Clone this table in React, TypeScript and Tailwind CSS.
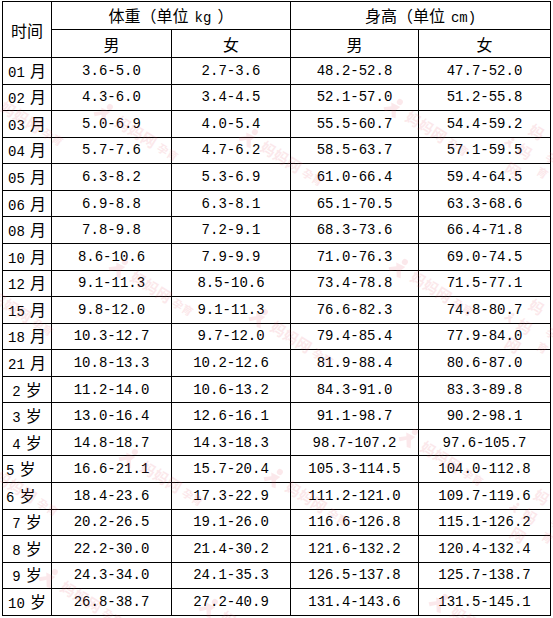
import React from "react";

const rows: [string, string, string, string, string, string, boolean?][] = [
  ["01", "月", "3.6-5.0", "2.7-3.6", "48.2-52.8", "47.7-52.0"],
  ["02", "月", "4.3-6.0", "3.4-4.5", "52.1-57.0", "51.2-55.8"],
  ["03", "月", "5.0-6.9", "4.0-5.4", "55.5-60.7", "54.4-59.2"],
  ["04", "月", "5.7-7.6", "4.7-6.2", "58.5-63.7", "57.1-59.5"],
  ["05", "月", "6.3-8.2", "5.3-6.9", "61.0-66.4", "59.4-64.5"],
  ["06", "月", "6.9-8.8", "6.3-8.1", "65.1-70.5", "63.3-68.6"],
  ["08", "月", "7.8-9.8", "7.2-9.1", "68.3-73.6", "66.4-71.8"],
  ["10", "月", "8.6-10.6", "7.9-9.9", "71.0-76.3", "69.0-74.5"],
  ["12", "月", "9.1-11.3", "8.5-10.6", "73.4-78.8", "71.5-77.1"],
  ["15", "月", "9.8-12.0", "9.1-11.3", "76.6-82.3", "74.8-80.7"],
  ["18", "月", "10.3-12.7", "9.7-12.0", "79.4-85.4", "77.9-84.0"],
  ["21", "月", "10.8-13.3", "10.2-12.6", "81.9-88.4", "80.6-87.0"],
  ["2", "岁", "11.2-14.0", "10.6-13.2", "84.3-91.0", "83.3-89.8"],
  ["3", "岁", "13.0-16.4", "12.6-16.1", "91.1-98.7", "90.2-98.1"],
  ["4", "岁", "14.8-18.7", "14.3-18.3", "98.7-107.2", "97.6-105.7"],
  ["5", "岁", "16.6-21.1", "15.7-20.4", "105.3-114.5", "104.0-112.8", true],
  ["6", "岁", "18.4-23.6", "17.3-22.9", "111.2-121.0", "109.7-119.6", true],
  ["7", "岁", "20.2-26.5", "19.1-26.0", "116.6-126.8", "115.1-126.2"],
  ["8", "岁", "22.2-30.0", "21.4-30.2", "121.6-132.2", "120.4-132.4"],
  ["9", "岁", "24.3-34.0", "24.1-35.3", "126.5-137.8", "125.7-138.7"],
  ["10", "岁", "26.8-38.7", "27.2-40.9", "131.4-143.6", "131.5-145.1"],
];

// faint pink stamps scattered over the table
const marks = [
  [-20, 80], [95, 95], [240, 120], [385, 90], [505, 105],
  [-30, 270], [110, 250], [250, 300], [390, 250], [505, 280],
  [-25, 450], [120, 440], [265, 460], [400, 420], [510, 470],
  [40, 560], [200, 590], [430, 585],
];

const cjk = "font-['Noto_Sans_CJK_SC',sans-serif]";
const mono = "font-['Liberation_Mono','Noto_Sans_CJK_SC',monospace]";

export default function App() {
  return (
    <div className="relative w-[553px] h-[618px] bg-white overflow-hidden pl-[2px] pt-[1px] text-black">
      <table className="w-[548px] table-fixed border-collapse border border-black">
        <colgroup>
          <col className="w-[49px]" />
          <col className="w-[120px]" />
          <col className="w-[119px]" />
          <col className="w-[128px]" />
          <col className="w-[132px]" />
        </colgroup>
        <thead className={`${cjk} text-[16px] leading-none`}>
          <tr className="h-[28px]">
            <th rowSpan={2} className="border border-black font-normal">时间</th>
            <th colSpan={2} className="border border-black font-normal">
              体重（单位<span className={`${mono} text-[14px] ml-[6px] mr-[6px]`}>kg</span>）
            </th>
            <th colSpan={2} className="border border-black font-normal">
              身高（单位<span className={`${mono} text-[14px] ml-[6px]`}>cm)</span>
            </th>
          </tr>
          <tr className="h-[28px]">
            <th className="border border-black font-normal">男</th>
            <th className="border border-black font-normal">女</th>
            <th className="border border-black font-normal">男</th>
            <th className="border border-black font-normal">女</th>
          </tr>
        </thead>
        <tbody className={`${mono} text-[14px] leading-none`}>
          {rows.map((r) => (
            <tr key={r[0] + r[1]} className="h-[26.57px]">
              <td className={`border border-black ${r[6] ? "text-left pl-[3px]" : "text-center"}`}>
                {r[0]}
                <span className={`${cjk} text-[16px] ml-[5px]`}>{r[1]}</span>
              </td>
              <td className="border border-black text-center">{r[2]}</td>
              <td className="border border-black text-center">{r[3]}</td>
              <td className="border border-black text-center">{r[4]}</td>
              <td className="border border-black text-center">{r[5]}</td>
            </tr>
          ))}
        </tbody>
      </table>

      {marks.map(([x, y], i) => (
        <div
          key={i}
          aria-hidden="true"
          className={`absolute flex items-center gap-1 rotate-[32deg] origin-left pointer-events-none text-[#e8566a] opacity-[0.13] ${cjk} text-[15px] font-bold`}
          style={{ left: x, top: y }}
        >
          <svg width="22" height="22" viewBox="0 0 22 22" fill="currentColor">
            <circle cx="13" cy="4" r="3" />
            <path d="M6 9 L16 8 L14 13 L18 20 L14 21 L10 15 L5 20 L2 17 L8 12 Z" />
          </svg>
          <span>妈妈网</span>
          <span className="text-[11px]">孕育</span>
        </div>
      ))}
    </div>
  );
}
